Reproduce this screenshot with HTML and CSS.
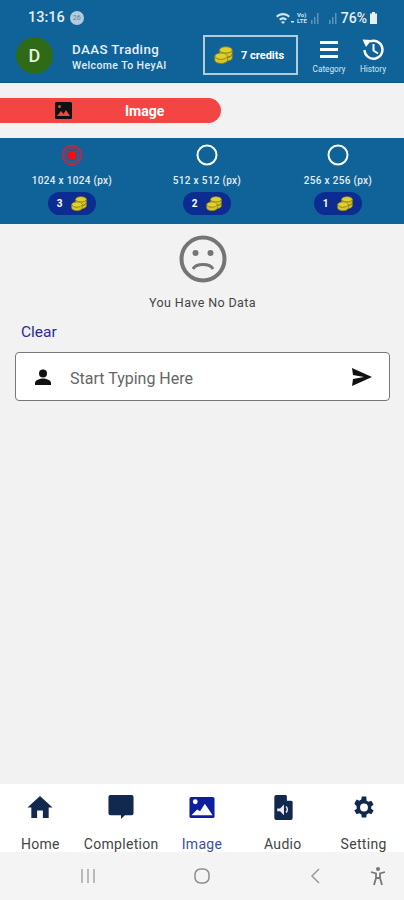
FILE: index.html
```html
<!DOCTYPE html>
<html lang="en">

<head>
    <meta charset="UTF-8">
    <meta name="viewport" content="width=device-width, initial-scale=1.0">
    <title>HeyAI Image</title>
    <link rel="stylesheet" href="styles.css">
</head>

<body>
    <svg class="defs" width="0" height="0">
        <symbol id="coins" viewBox="0 0 24 24">
            <ellipse cx="15" cy="5" rx="8" ry="4" fill="#e3cf2c" stroke="#8d8420" stroke-width="1"/>
            <path d="M7 6v4c0 2 3.500 4 8 4s8-2 8-4V6c-1 2-4 3-8 3S8 8 7 6z" fill="#d9c526" stroke="#8d8420" stroke-width="1"/>
            <path d="M7 11v4c0 2 3.500 4 8 4s8-2 8-4v-4c-1 2-4 4-8 4s-7-2-8-4z" fill="#d9c526" stroke="#8d8420" stroke-width="1"/>
            <ellipse cx="9" cy="13" rx="8" ry="4" fill="#e3cf2c" stroke="#8d8420" stroke-width="1"/>
            <path d="M1 13v5c0 2 3.500 4 8 4s8-2 8-4v-5c-1 2-4 4-8 4s-7-2-8-4z" fill="#d9c526" stroke="#8d8420" stroke-width="1"/>
        </symbol>
    </svg>

    <div class="screen">
        <header class="top">
            <div class="status">
                <span class="clock">13:16</span>
                <span class="status-dot">26</span>
                <span class="status-right">
                    <svg class="wifi" width="20" height="12" viewBox="0 0 20 12">
                        <path d="M1 4c4-4 10-4 14 0l-1.500 1.500c-3-3-8-3-11 0zM4 7c2.500-2.300 5.500-2.300 8 0l-1.500 1.500c-1.700-1.500-3.300-1.500-5 0zM8 12l-2-2c1.300-1 2.700-1 4 0z" fill="#d5e3ee"/>
                        <rect x="16" y="9" width="3" height="1.500" fill="#d5e3ee"/>
                    </svg>
                    <span class="volte">Vo)<br>LTE</span>
                    <svg width="30" height="12" viewBox="0 0 30 12">
                        <path d="M2 12V8h1.500v4zM5 12V5h1.500v7zM8 12V1h1.500v11zM20 12V8h1.500v4zM23 12V5h1.500v7zM26 12V1h1.500v11z" fill="#5f93b7"/>
                    </svg>
                    <span class="battery-text">76%</span>
                    <svg width="9" height="12" viewBox="0 0 9 12">
                        <path d="M3 0h3v1.500h2V12H1V1.500h2z" fill="#e6eef4"/>
                    </svg>
                </span>
            </div>

            <div class="toolbar">
                <div class="avatar">D</div>
                <div class="user">
                    <div class="user-name">DAAS Trading</div>
                    <div class="user-note">Welcome To HeyAI</div>
                </div>
                <div class="credits">
                    <svg width="19" height="19"><use href="#coins"/></svg>
                    <span>7 credits</span>
                </div>
                <div class="tool tool-category">
                    <svg width="24" height="24" viewBox="0 0 24 24">
                        <path d="M3 4h18v3H3zM3 11h18v3H3zM3 18h18v3H3z" fill="#fff"/>
                    </svg>
                    <span>Category</span>
                </div>
                <div class="tool">
                    <svg width="24" height="24" viewBox="0 0 24 24">
                        <path d="M9 4.500A9 9 0 1 1 3.500 13" fill="none" stroke="#fff" stroke-width="2.400"/>
                        <path d="M1.500 2.500l9 .5-5.500 7z" fill="#fff"/>
                        <path d="M12.500 7v6.500l4.500 3" fill="none" stroke="#fff" stroke-width="2"/>
                    </svg>
                    <span>History</span>
                </div>
            </div>
        </header>

        <div class="tab-pill">
            <svg width="17" height="17" viewBox="0 0 17 17">
                <rect width="17" height="17" rx="1.500" fill="#111"/>
                <circle cx="4.500" cy="4.500" r="1.500" fill="#f44545"/>
                <path d="M2 14l4-5 2.500 3 2.500-4 4 6z" fill="#f44545"/>
            </svg>
            <span>Image</span>
        </div>

        <section class="sizes">
            <div class="size">
                <svg class="radio" width="22" height="22" viewBox="0 0 22 22">
                    <circle cx="11" cy="11" r="9.500" fill="none" stroke="#d8203a" stroke-width="1.500"/>
                    <circle cx="11" cy="11" r="7" fill="none" stroke="#b5304e" stroke-width="1"/>
                    <circle cx="11" cy="11" r="4.500" fill="#f80d0d"/>
                </svg>
                <div class="size-label">1024 x 1024 (px)</div>
                <div class="cost"><b>3</b><svg width="16" height="16"><use href="#coins"/></svg></div>
            </div>
            <div class="size">
                <svg class="radio" width="22" height="22" viewBox="0 0 22 22">
                    <circle cx="11" cy="11" r="9.500" fill="none" stroke="#fff" stroke-width="2"/>
                </svg>
                <div class="size-label">512 x 512 (px)</div>
                <div class="cost"><b>2</b><svg width="16" height="16"><use href="#coins"/></svg></div>
            </div>
            <div class="size">
                <svg class="radio" width="22" height="22" viewBox="0 0 22 22">
                    <circle cx="11" cy="11" r="9.500" fill="none" stroke="#fff" stroke-width="2"/>
                </svg>
                <div class="size-label">256 x 256 (px)</div>
                <div class="cost"><b>1</b><svg width="16" height="16"><use href="#coins"/></svg></div>
            </div>
        </section>

        <main class="content">
            <div class="empty">
                <svg width="48" height="48" viewBox="0 0 48 48">
                    <circle cx="24" cy="24" r="21.500" fill="none" stroke="#757575" stroke-width="4"/>
                    <circle cx="16.500" cy="18" r="3" fill="#757575"/>
                    <circle cx="31.500" cy="18" r="3" fill="#757575"/>
                    <path d="M14 34c3-6 17-6 20 0" fill="none" stroke="#757575" stroke-width="3"/>
                </svg>
                <p>You Have No Data</p>
            </div>
            <div class="clear">Clear</div>
            <div class="prompt">
                <svg class="prompt-user" width="20" height="20" viewBox="0 0 20 20">
                    <circle cx="10" cy="5.500" r="4" fill="#111"/>
                    <path d="M2 17v-2c0-3 5-4.500 8-4.500s8 1.500 8 4.500v2z" fill="#111"/>
                </svg>
                <span class="prompt-text">Start Typing Here</span>
                <svg width="22" height="20" viewBox="0 0 22 20">
                    <path d="M1 1l20 9-20 9 1-7 11-2-11-2z" fill="#111"/>
                </svg>
            </div>
        </main>

        <nav class="bottom-nav">
            <div class="nav-item">
                <svg width="28" height="28" viewBox="0 0 28 28">
                    <path d="M14 2L1 14h4v11h6v-8h6v8h6V14h4z" fill="#12294f"/>
                </svg>
                <span>Home</span>
            </div>
            <div class="nav-item">
                <svg width="28" height="28" viewBox="0 0 28 28">
                    <path d="M3 1h22a2 2 0 0 1 2 2v17a2 2 0 0 1-2 2h-7l-4 4v-4H3a2 2 0 0 1-2-2V3a2 2 0 0 1 2-2z" fill="#12294f"/>
                </svg>
                <span>Completion</span>
            </div>
            <div class="nav-item is-active">
                <svg width="28" height="28" viewBox="0 0 28 28">
                    <rect x="1" y="3" width="26" height="22" rx="2" fill="#0d1fa0"/>
                    <circle cx="7" cy="8" r="2.500" fill="#fff"/>
                    <path d="M3 22l6-6 3 2 5-8 8 12z" fill="#fff"/>
                </svg>
                <span>Image</span>
            </div>
            <div class="nav-item">
                <svg width="28" height="28" viewBox="0 0 28 28">
                    <path d="M7 1h10l7 7v17a2 2 0 0 1-2 2H7a2 2 0 0 1-2-2V3a2 2 0 0 1 2-2z" fill="#12294f"/>
                    <path d="M18 1l6 6h-6z" fill="#fff"/>
                    <path d="M8 15h3l4-4v11l-4-4H8z" fill="#e8ecf2"/>
                    <path d="M17 13c2 1.500 2 5 0 6" fill="none" stroke="#e8ecf2" stroke-width="1.500"/>
                </svg>
                <span>Audio</span>
            </div>
            <div class="nav-item">
                <svg width="28" height="28" viewBox="0 0 24 24">
                    <path d="M19.400 13a7.500 7.500 0 0 0 0-2l2.100-1.600-2-3.500-2.500 1a7.500 7.500 0 0 0-1.700-1L15 2.200h-4l-.4 2.700a7.500 7.500 0 0 0-1.700 1l-2.500-1-2 3.500L6.500 11a7.500 7.500 0 0 0 0 2l-2.100 1.600 2 3.500 2.500-1a7.500 7.500 0 0 0 1.700 1l.4 2.700h4l.4-2.700a7.500 7.500 0 0 0 1.700-1l2.500 1 2-3.500zM13 15.500a3.500 3.500 0 1 1 0-7 3.500 3.500 0 0 1 0 7z" fill="#12294f" transform="translate(-1 0)"/>
                </svg>
                <span>Setting</span>
            </div>
        </nav>

        <div class="system-nav">
            <svg width="16" height="16" viewBox="0 0 16 16">
                <path d="M2 1v14M8 1v14M14 1v14" stroke="#9a9a9a" stroke-width="1.300" fill="none"/>
            </svg>
            <svg class="sys-home" width="18" height="18" viewBox="0 0 18 18">
                <rect x="2" y="2" width="14" height="14" rx="5.500" fill="none" stroke="#8e8e8e" stroke-width="1.500"/>
            </svg>
            <svg class="sys-back" width="12" height="18" viewBox="0 0 12 18">
                <path d="M10 2L3 9l7 7" fill="none" stroke="#9a9a9a" stroke-width="1.500"/>
            </svg>
            <svg class="sys-person" width="18" height="20" viewBox="0 0 18 20">
                <circle cx="9" cy="3" r="2" fill="#777"/>
                <path d="M2 6l5 1.500V12l-2 7M16 6l-5 1.500V12l2 7M7 12h4" fill="none" stroke="#777" stroke-width="1.800"/>
            </svg>
        </div>
    </div>
</body>
</html>
```

FILE: styles.css
```css
* {
    margin: 0;
    padding: 0;
    box-sizing: border-box;
}

body {
    background-color: #f2f2f2;
    font-family: Roboto, "Liberation Sans", sans-serif;
    overflow: hidden;
}

.defs {
    position: absolute;
}

.screen {
    display: flex;
    flex-direction: column;
    height: 900px;
}

/* header */
.top {
    height: 83px;
    background-color: #0f6399;
    color: #fff;
    border-bottom: 1px solid #0d5688;
}

.status {
    display: flex;
    align-items: center;
    height: 35px;
    padding: 0 26px 0 28px;
}

.clock {
    font-size: 14.5px;
    font-weight: 500;
    color: #e4edf3;
}

.status-dot {
    width: 14px;
    height: 14px;
    margin-left: 5px;
    border-radius: 50%;
    background-color: #b5cbdb;
    color: #5a7f99;
    font-size: 7px;
    line-height: 14px;
    text-align: center;
}

.status-right {
    display: flex;
    align-items: center;
    gap: 2px;
    margin-left: auto;
}

.volte {
    font-size: 6px;
    line-height: 6px;
    font-weight: 700;
    color: #d5e3ee;
}

.battery-text {
    font-size: 14px;
    font-weight: 500;
    color: #e6eef4;
}

.toolbar {
    display: flex;
    align-items: center;
    height: 40px;
    padding-left: 16px;
}

.avatar {
    width: 37px;
    height: 37px;
    border-radius: 50%;
    background-color: #2f6a16;
    color: #e8f2df;
    font-size: 18px;
    font-weight: 500;
    line-height: 37px;
    text-align: center;
}

.user {
    width: 131px;
    margin-left: 19px;
    padding-top: 3px;
}

.user-name {
    font-size: 13.300px;
    font-weight: 500;
    letter-spacing: 0.4px;
    color: #e7eff5;
    line-height: 17px;
}

.user-note {
    font-size: 10.500px;
    font-weight: 500;
    letter-spacing: 0.4px;
    color: #e2ecf3;
    line-height: 15px;
}

.credits {
    display: flex;
    flex: none;
    align-items: center;
    gap: 8px;
    width: 95px;
    height: 40px;
    padding-left: 9px;
    border: 2px solid #b4cbdb;
    font-size: 11px;
    font-weight: 700;
}

.tool {
    display: flex;
    flex: none;
    flex-direction: column;
    align-items: center;
    width: 30px;
    margin-left: 11px;
    font-size: 8.200px;
    color: #dbe7ef;
}

.tool-category {
    width: 36px;
    margin-left: 13px;
}

.tool svg {
    margin-bottom: 3px;
}

/* image tab */
.tab-pill {
    display: flex;
    align-items: center;
    width: 221px;
    height: 25px;
    margin-top: 15px;
    padding-left: 55px;
    background-color: #f44545;
    border-radius: 0 13px 13px 0;
    color: #fff;
    font-size: 14px;
    font-weight: 700;
}

.tab-pill span {
    margin-left: 53px;
}

/* size options */
.sizes {
    display: grid;
    grid-template-columns: 134px 136px 126px;
    height: 86px;
    margin-top: 15px;
    padding: 6px 0 0 5px;
    background-color: #0f6399;
    color: #fff;
}

.size {
    display: flex;
    flex-direction: column;
    align-items: center;
}

.size-label {
    margin-top: 9px;
    font-size: 10px;
    font-weight: 500;
    letter-spacing: 0.3px;
    color: #e4edf3;
    line-height: 12px;
}

.cost {
    display: flex;
    align-items: center;
    justify-content: center;
    gap: 9px;
    width: 48px;
    height: 23px;
    margin-top: 5px;
    background-color: #0d2c92;
    border-radius: 12px;
    font-size: 10px;
}

/* main area */
.content {
    flex: 1;
    padding: 11px 14px 0 15px;
}

.empty {
    display: flex;
    flex-direction: column;
    align-items: center;
}

.empty p {
    margin-top: 13px;
    font-size: 12.500px;
    letter-spacing: 0.4px;
    color: #444;
    line-height: 14px;
}

.clear {
    margin: 14px 0 0 6px;
    color: #2c2c96;
    font-size: 15.500px;
    line-height: 17px;
}

.prompt {
    display: flex;
    align-items: center;
    height: 49px;
    margin-top: 11px;
    padding: 0 16px 0 17px;
    background-color: #fff;
    border: 1px solid #777;
    border-radius: 4px;
}

.prompt-user {
    margin-top: 3px;
}

.prompt-text {
    flex: 1;
    margin: 3px 0 0 17px;
    color: #666;
    font-size: 16px;
}

/* bottom nav */
.bottom-nav {
    display: flex;
    height: 68px;
    background-color: #fff;
    padding-top: 10px;
}

.nav-item {
    display: flex;
    flex: 1;
    flex-direction: column;
    align-items: center;
    gap: 15px;
    color: #444;
    font-size: 14px;
    line-height: 16px;
    letter-spacing: 0.3px;
}

.nav-item.is-active {
    color: #3c4f9c;
}

.system-nav {
    display: flex;
    align-items: center;
    height: 48px;
    padding-left: 80px;
    background-color: #f4f4f4;
}

.sys-home {
    margin-left: 97px;
}

.sys-back {
    margin-left: 98px;
}

.sys-person {
    margin-left: 48px;
}
```
